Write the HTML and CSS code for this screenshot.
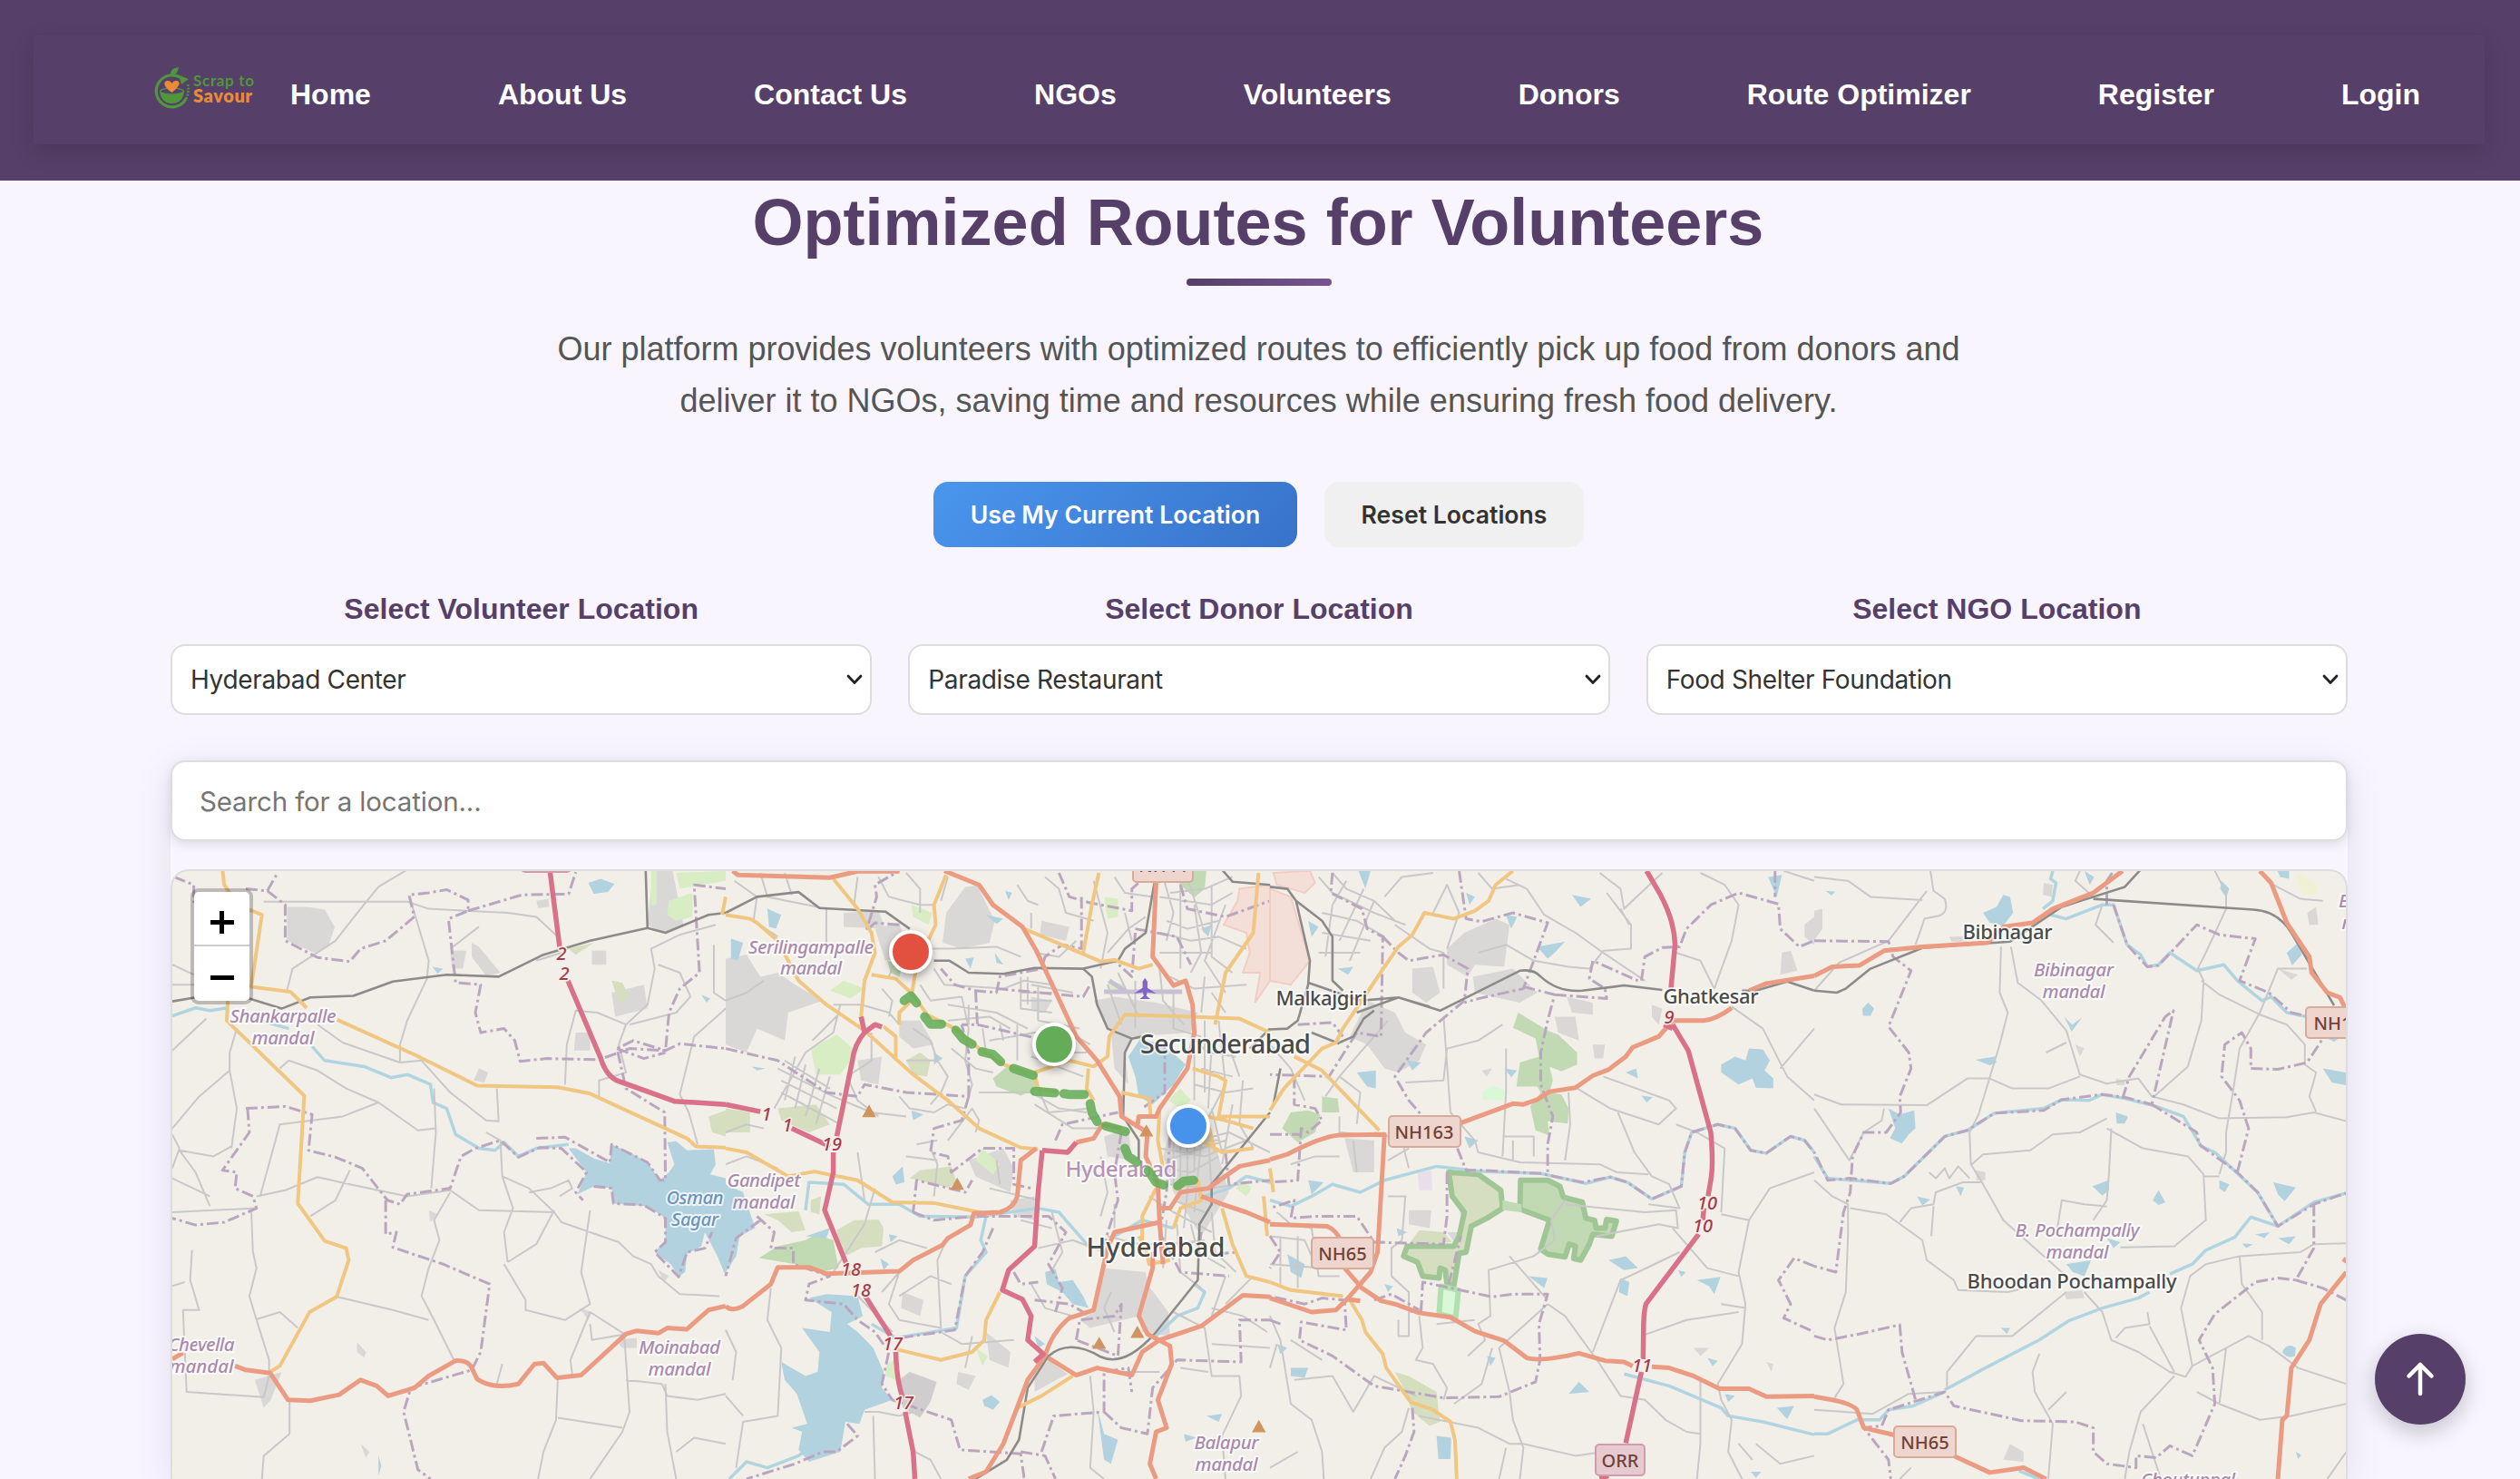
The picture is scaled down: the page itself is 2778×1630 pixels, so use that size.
FILE: index.html
```html
<!DOCTYPE html>
<html lang="en">
<head>
<meta charset="utf-8">
<title>Scrap to Savour - Route Optimizer</title>
<link rel="stylesheet" href="styles.css">
</head>
<body>
<header class="header">
  <nav class="nav">
    <svg class="logo" viewBox="0 0 112 52" aria-label="Scrap to Savour">
      <path d="M31 14A17.500 17.500 0 1 0 35 36" fill="none" stroke="#4f973a" stroke-width="3.200"/>
      <path d="M35 36Q39 28 37 20" fill="none" stroke="#4f973a" stroke-width="2.600" stroke-dasharray="2 1.600"/>
      <path d="M18 10Q17 2 27 1Q26 10 18 10Z" fill="#4f973a"/>
      <path d="M27 10L38 14L30 20Z" fill="#4f973a"/>
      <path d="M6 28Q19 35 33 28Q31 41 19.500 41Q8 41 6 28Z" fill="#4f973a"/>
      <ellipse cx="19.500" cy="27.500" rx="13" ry="3.500" fill="none" stroke="#4f973a" stroke-width="1.300"/>
      <path d="M19.500 29C8 21 11 16 15 16Q18 16 19.500 19Q21 16 24 16C29 16 30 21 19.500 29Z" fill="#e88b37"/>
      <text x="43" y="21.500" class="logo-a" textLength="67">Scrap to</text>
      <text x="43" y="40" class="logo-b" textLength="65">Savour</text>
    </svg>
    <a>Home</a><a>About Us</a><a>Contact Us</a><a>NGOs</a><a>Volunteers</a><a>Donors</a><a>Route Optimizer</a><a>Register</a><a>Login</a>
  </nav>
</header>
<main class="page">
  <h1 class="title">Optimized Routes for Volunteers</h1>
  <div class="rule"></div>
  <p class="lead">Our platform provides volunteers with optimized routes to efficiently pick up food from donors and<br>deliver it to NGOs, saving time and resources while ensuring fresh food delivery.</p>
  <div class="actions">
    <button class="btn btn-primary">Use My Current Location</button>
    <button class="btn btn-plain">Reset Locations</button>
  </div>
  <div class="pickers">
    <div class="picker"><h3>Select Volunteer Location</h3><div class="select"><span>Hyderabad Center</span><svg viewBox="0 0 20 14"><path d="M3 3l7 7.500l7-7.500"/></svg></div></div>
    <div class="picker"><h3>Select Donor Location</h3><div class="select"><span>Paradise Restaurant</span><svg viewBox="0 0 20 14"><path d="M3 3l7 7.500l7-7.500"/></svg></div></div>
    <div class="picker"><h3>Select NGO Location</h3><div class="select"><span>Food Shelter Foundation</span><svg viewBox="0 0 20 14"><path d="M3 3l7 7.500l7-7.500"/></svg></div></div>
  </div>
  <section class="map-card">
    <div class="search">Search for a location...</div>
    <div class="map">
      <svg class="map-canvas" viewBox="190 960 2396 670">
        <!-- western countryside -->
        <g transform="translate(180 940) scale(.3954 .44)">
          <path class="u" d="M345 135H400L450 142L478 185L460 235L420 250L345 220ZM860 225L880 235L940 300L900 308L860 260ZM800 245H845L835 290H805ZM1195 245H1235V280H1195ZM1150 450H1190V495H1145ZM1250 350L1340 330L1350 390L1260 410ZM1365 45H1420L1450 180L1390 200L1350 180ZM880 540L905 550L895 575L865 570ZM1040 120L1075 115V135L1045 138ZM540 1225L565 1250L560 1265L540 1250ZM740 895L765 905L745 925ZM255 1320L330 1300L300 1370L280 1390ZM550 1480L575 1500L565 1515ZM1160 1140L1195 1150L1185 1170ZM1260 1220L1320 1215L1320 1240L1280 1240ZM1380 1045L1410 1060L1395 1075Z"/>
          <path class="p" d="M1360 45H1375V130H1360ZM1430 50L1568 45V70L1440 90ZM1410 120L1475 100V160L1430 170L1405 155Z"/>
          <path class="o" d="M1250 320L1280 325L1300 360L1270 375ZM1130 240L1200 225L1150 255ZM1520 660L1568 645V710L1530 700Z"/>
          <path class="w" d="M1185 75L1220 65L1258 78L1240 98L1200 102ZM1130 740H1150L1200 765L1245 778L1250 730L1300 750L1350 775L1385 820L1410 800L1425 780L1405 725L1430 722L1460 745L1535 742L1540 780L1525 805L1568 815V1060L1545 1010L1510 950L1500 985L1460 1005L1455 1050L1437 1062L1415 1030L1370 1000L1400 970L1400 915L1350 885L1255 878L1250 840L1200 835L1155 855L1180 800ZM750 285L780 290L765 302ZM600 1510L608 1535L600 1560ZM1500 355L1525 365L1515 375Z"/>
          <path class="v" d="M25 408L90 388L130 395L180 388M230 410L350 440M415 485L450 520L560 535L635 563L680 555L745 580L752 625L790 640L815 705L880 740L925 745L950 725L990 760L1040 740L1130 730"/>
          <path class="r" d="M680 42L600 85L550 140L480 220L360 290L345 345M280 122H680L740 140L960 150L1040 160L1100 210M690 120L740 270L735 315L680 420L660 480V525M880 185L800 240M25 280L85 305M25 330H90M205 440L185 500V545L100 610L25 690M120 415L25 495M185 545L205 640L190 740M25 705L45 740L25 790M45 745L140 760L190 735M45 745L90 800L130 885M25 815L130 860M25 900L260 890M260 860L340 845L430 812L520 830L680 860L800 845L880 895L1090 900L1110 925L1270 975L1310 1010L1360 1030L1380 1060L1440 1105L1550 1110M270 860L325 680L500 660L600 625L710 695L760 690M600 625L510 590L430 545L350 520L325 540M430 430L500 475L660 525L720 520L800 600L900 670L935 672L930 590M755 590L760 700L747 840M900 700L940 720L945 810L975 890L950 950L960 1025M800 850L755 920L770 970L740 1040L720 1110L755 1170L810 1270M485 1112L640 1145L740 1170M245 890L250 1000L260 1040L240 1110L260 1170L295 1270V1300M260 1168L325 1150L375 1190M80 995L75 1070L100 1145H55L65 1350L280 1363L295 1310M25 1085L60 1075M352 1375V1455L280 1510L275 1568M945 810L1020 840L1090 900M950 1030L1010 1120V1145L1120 1170L1190 1130L1165 1050L1190 895M1090 895L1040 980L960 1025M1190 1150L1285 1205L1300 1400L1280 1450L1190 1568M1190 1150L1135 1270L1140 1305M1100 1315L1095 1420L1060 1500L1045 1568M1100 1415L1280 1440M1290 1320L1390 1330L1405 1360L1490 1370L1568 1355M1400 1330L1405 1450L1430 1568M1430 1500L1480 1465L1568 1480M1120 580L1125 480L1150 395L1210 400L1290 430L1350 380L1370 290L1360 240L1440 205L1540 180M1290 430L1270 480L1290 550L1215 570V610M1380 280L1440 300L1470 360L1430 400L1300 430M1568 390L1480 460L1440 605L1465 650L1490 730M1535 230V350L1568 370M1040 270L1110 250M1190 1180L1195 1220L1290 1205M945 1280L930 1330M410 910L480 870L520 795M1020 850L1080 840L1130 820L1140 840L1105 860"/>
          <path class="b" d="M30 60L85 80V125M230 90L290 95L340 130V220L430 262L520 272L550 240L620 220L700 160L685 105L740 100L790 92L850 118L850 145L795 165L815 325L885 330L870 400L885 450L950 440L980 470L995 522L1070 515L1215 518L1300 490L1400 495L1410 400L1440 340L1495 300L1480 80L1568 90M290 95L320 48M850 145L1000 105L1130 103L1150 48M230 640L340 635L415 655L405 745L480 762L555 790L625 870L660 880L680 855L800 840L830 760L870 740L940 720L990 762L1050 738L1110 740L1180 800L1150 850L1170 870M235 640L240 700L165 795L205 800L200 840L250 860L260 890L170 925L90 932L25 915M620 870V955L650 950L640 988L780 1030L910 1080L885 1250L860 1295L690 1340L670 1400L710 1545L745 1568M1040 715L1120 712L1245 775L1250 730L1350 775L1385 820H1400L1398 650L1290 590L1265 490L1310 470L1400 495L1440 478L1568 490M1200 835L1250 840L1255 878L1340 882L1400 915V975L1370 1000L1437 1062L1460 1000L1510 990L1530 950M1265 490L1340 515L1400 500"/>
          <path class="rail" d="M25 372L90 362M240 365L330 390L410 362L530 358L640 322L790 305L935 310L1060 255L1190 220L1350 188L1400 200L1520 155L1568 150M1350 188L1345 45"/>
          <path class="s" d="M165 42L170 80L185 100M240 142L275 155L245 335L355 348L400 388M180 370L177 420L393 608L375 878L450 972L510 990L517 1020L483 1112L408 1150L325 1285L298 1300M485 418L700 505L875 583L1100 587L1190 603L1460 715L1485 735L1568 738M1568 110L1558 155"/>
          <path class="t" d="M25 1268L55 1252M200 1285L230 1295L298 1303L348 1370L410 1372L490 1357L550 1320L595 1335L627 1360L700 1340L740 1310L815 1272Q850 1270 860 1290L875 1318Q920 1345 990 1330L1035 1280L1060 1278L1098 1315L1165 1308L1290 1205L1320 1197L1380 1203L1405 1190L1460 1193L1520 1145L1568 1135"/>
          <path class="m" d="M1078 45L1105 235M1128 320L1220 515Q1235 560 1270 572L1425 622L1568 630"/>
        </g>
        <!-- city and western lakes -->
        <g transform="translate(800 940) scale(.38265 .44)">
          <path class="u" d="M0 265L60 255L100 310L150 300L200 330L280 370L180 400L170 470L90 440L60 500L0 480ZM625 225L635 150L690 85L725 82L775 170L760 225L680 240ZM500 420H560L600 480L540 490L500 460ZM340 150L440 145L460 190L340 185ZM430 190L500 175L530 260L460 270ZM1060 370L1120 360L1240 375L1360 400L1340 450L1170 460L1150 500L1160 580L1120 540L1110 450ZM1090 710L1160 690L1170 770L1100 760ZM1280 690L1400 700L1450 850L1370 960L1290 850L1260 760ZM1085 1040L1210 1050L1215 1080L1275 1150L1280 1210L1200 1200L1190 1160L1050 1190L1020 1170L1060 1150ZM750 1200L820 1250L815 1290L760 1270ZM670 1300L720 1310L700 1345L665 1330ZM890 1310L930 1270L985 1305L890 1350ZM700 770L800 740L830 790L820 850L720 810ZM510 1100L570 1120L560 1160L505 1140ZM910 170L990 185L980 220L905 205ZM380 520L450 510L440 580L390 570ZM880 360L940 370L920 400L880 390ZM820 870L890 860V920L830 910Z"/>
          <path class="u u-dark" d="M500 1320L530 1300L608 1325L590 1375L560 1415L510 1390Z"/>
          <path class="f" d="M770 565L810 535L890 560L895 590L850 608L780 585ZM95 1015L150 985L230 970L260 955L310 970L325 1040L285 1048L200 1030ZM1310 80L1340 42H1385L1380 90L1350 112ZM465 270L510 280L500 310L475 300Z"/>
          <path class="o" d="M320 945L370 920L440 918L455 940L450 985L390 990L350 1008L325 980ZM530 815L560 795L650 785L665 825L640 838ZM110 905L210 898L230 945L190 950L150 920ZM520 520L560 500L590 520L580 560L540 555ZM150 640L260 630L300 680L240 700L160 670ZM0 640L70 650V700L0 700ZM245 870L275 860L270 905L245 900Z"/>
          <path class="p" d="M245 490L320 455L380 500L330 555H260ZM300 345L340 320L400 340L360 365ZM535 130L595 150L585 180L540 160ZM720 770L740 740L790 780L770 805ZM1090 110L1130 115L1130 160L1100 165ZM1275 620L1310 590L1340 620L1310 640ZM465 1280L485 1270L490 1320L460 1310ZM1470 840Q1490 815 1515 840L1500 860ZM720 1240L755 1260L740 1285ZM1100 320L1150 330L1140 345L1100 340Z"/>
          <path class="mil" d="M1480 90L1568 80V320L1525 375L1540 300L1490 300L1510 250L1500 200L1435 180L1475 120Z"/>
          <path class="w" d="M1160 510L1195 465L1260 480L1300 510L1325 530L1290 580L1230 630L1190 610L1180 560ZM0 830L50 850L85 940L40 960L30 1010L0 1050ZM240 1115L290 1105L380 1110L395 1160L350 1180L380 1200L425 1240L455 1300L450 1340L480 1370L400 1395L385 1430L345 1425L330 1500L240 1525L210 1495L220 1450L190 1440L235 1430L205 1355L170 1320L160 1275L230 1310L265 1300L270 1250L220 1190L300 1200L305 1150ZM920 1050L950 1042L960 1075L1000 1070L1030 1110L1045 1140L1000 1130L970 1100L925 1080ZM480 810L510 785L515 825L490 830ZM120 140L160 155L145 190L125 185ZM15 215L50 225L35 270L15 265ZM740 1370L765 1358L790 1375L770 1395L745 1385ZM1070 1390L1090 1455L1130 1470L1110 1530L1090 1520ZM1385 1410L1430 1405L1420 1425ZM1320 1455L1355 1465L1325 1475ZM750 155L800 165L780 178ZM690 265L715 262L705 290ZM775 250L800 280L780 275ZM300 940L290 965L230 960ZM445 1015L470 1030L455 1045ZM470 955L495 960L475 975ZM805 95L825 100L815 118ZM600 500L625 515L600 530ZM535 645L570 655L540 670ZM890 1210L920 1230L900 1240ZM1370 190L1400 180L1390 210ZM75 535L115 540L90 545Z"/>
          <path class="v" d="M230 895L240 825L340 830L410 880L500 880L560 910L720 912L900 890L960 900L1050 990M1120 960L1200 920L1290 940M750 910L735 970L750 1000L690 1060L665 1190L490 1215L420 1180M1350 1080L1380 1100L1360 1140L1300 1160L1240 1210M1380 860L1450 840L1500 810L1568 825M10 1568L60 1525L120 1540L210 1510L240 1490"/>
          <path class="r" d="M25 70L90 110L80 170L150 210M100 50L120 110L290 140V230M170 50L190 105M380 60L370 130M440 60L470 110L560 130L600 130M520 50L560 90V150M590 240H650L780 235L850 260M880 150V190M640 60L620 120M330 380L310 450L230 500L140 640M310 380H390L470 400L500 430M330 400L250 470M500 250L470 310M560 330L590 370L680 360L700 440L690 520L710 580L690 640L640 630L600 650L530 640L500 610M600 290L630 330L800 340L860 320L940 330M850 310V390L940 400M870 310V380M900 330V420M850 350H940M850 370H940M450 340L480 370L470 410M540 440L590 470L610 520L520 520M610 520L640 560L620 600L590 630M150 540L310 610L420 650L520 660M170 520L300 590M200 510L170 620M230 530L200 640M270 540L230 660M300 560L260 680M160 600L330 680M160 570L320 640M420 450V520L350 560L380 620L440 660M0 700L60 680L110 690M0 780L60 760L150 790M0 370L60 350L110 320M600 860L610 780L590 740M550 730L610 720M720 700L730 670L710 640L640 720M730 600H880L960 640L1040 650M900 590L930 650L1050 640M760 470L890 450L990 450L1050 480M820 440L760 410L640 420M740 440L750 500M790 430L800 470M840 430V520M700 380V430M960 460V500L1040 500M1100 250L1160 190L1210 160M1060 70L1100 200L1080 290M920 60L960 90L980 150L1060 170M840 80L870 120L900 130M1010 220L960 260L890 250M1120 60L1150 100L1230 110M1150 150L1170 220M1100 330L1140 430M1130 300L1190 410M1180 320V440M1250 290L1260 370L1320 430M1290 350V440L1370 460M1260 60L1290 150L1270 220M1250 110L1400 130L1460 100M1270 170L1330 190L1420 170M1310 70V290M1350 130L1370 250L1340 300M1400 80V260L1460 300M1250 200L1340 220L1420 210L1500 240M1250 250H1400M1380 420V600M1420 420L1440 580L1380 680M1340 460L1390 500L1470 510M1350 580L1440 600L1520 590M1280 680L1360 720L1450 700L1568 750M1400 640L1430 750M1460 630L1430 780M1490 570L1480 680L1520 740M1250 740L1380 760L1500 720M1270 790L1340 800L1420 760M1290 700L1290 840M1330 700V850M1370 720L1350 900M1220 860L1290 900L1400 950M1270 920L1260 1040M1300 930L1310 1050L1370 1090M1340 930L1360 1000L1440 1040M1400 900L1410 1000L1470 1050M1120 880V940M1080 760L1100 850L1080 910M1000 790L1070 800M940 900L970 1000L930 1060M1100 960L1190 980H1280L1380 970M900 990L1000 970L1090 1000M880 1080L920 1140L1000 1160M640 960L610 1020L620 1190L500 1170L470 1130L500 1050M500 1050L450 1100M370 1100L480 1200M620 1200L680 1230L830 1220M710 1210L690 1290M130 1090L120 1170L160 1240L150 1410L50 1425L30 1540M0 1195L30 1250L20 1320M0 1360L50 1410M400 1400L440 1400L500 1410L540 1400M425 1410L430 1568M545 1500L590 1520L620 1568M1050 1310L1060 1400L1050 1540L1090 1568M1290 1150L1380 1190L1400 1310H1480L1485 1360L1430 1460L1440 1568M1110 1100L1090 1140L1120 1200M1400 1230L1568 1240M1390 1300L1310 1290M1250 1300L1120 1300M1560 1200L1490 1160L1400 1140M850 920L940 940M760 840L900 870M780 770L790 830M520 760L610 770M380 750L400 870M430 840L400 930L310 1050M430 1000L500 970L580 990M650 1080L590 1060L500 1110M1440 1060L1400 1160M1520 1060L1440 1130M640 380L780 400L870 440M880 330L1000 350M900 420L1020 440M650 490L720 540L770 550M880 510L1030 560M890 630L1000 690L1080 690M1280 720H1420M1270 770L1440 720M1310 690V840M1350 690V800M1390 700L1400 850M1280 830L1400 840L1480 830M1290 870L1380 900M1330 850L1320 940M1350 480V620M1370 540L1460 560M1400 480L1390 640M1440 460L1480 560M1280 100L1380 90L1460 60M1330 60L1380 200M1440 130L1380 270L1440 350M1280 310L1350 340L1500 330M1380 310L1370 400M1400 350L1440 400"/>
          <path class="b" d="M500 180L430 175L405 195L435 110L430 80L500 45M960 50L990 110L1050 125L1170 145L1170 90L1210 60M1025 110V240L970 230L920 260L910 290L790 310L780 350L720 345L660 330L620 290M720 345L725 430L680 430M780 340L1030 360L1050 330M725 430L900 465M1180 190L1300 210L1340 280M1310 80L1330 140L1440 160L1568 120M1180 200L1170 310L1120 270M0 490L150 520L290 600L380 610L400 580L520 600L700 610V500L680 430M700 610L680 670L600 690L590 750L640 760L650 800L740 740L830 740V830L880 840M540 900L550 820L690 850L710 820M540 900L600 920L720 910L930 910L980 950L930 1030L970 1090L950 1150M1140 700L1120 800L1130 870L1090 980M950 720L970 680L1130 650M1265 470V600L1200 640M1280 710L1270 850L1250 950L1310 1050L1450 1060M1440 750L1450 830L1568 820M1370 950L1360 1010L1470 1000M90 910L140 950L130 990L195 990V1030L300 1060L240 1080L230 1120L340 1130L380 1170L430 1200L470 1250L450 1330L480 1370L650 1420L675 1495L850 1505L860 1568M770 940L740 1000L690 1060L660 1195L500 1215M850 1500L920 1510L950 1568M910 1500L945 1410L1090 1400V1300L1160 1290L1170 1350M1090 1400L1140 1440L1215 1455L1230 1340L1300 1270L1485 1275L1480 1170H1568M1010 1220L1020 1170L1120 1160L1140 1130L1130 1260L1010 1220M830 1050L850 1080L900 1075M890 1120L990 1130L1050 1160M100 920L30 965L0 1060M350 1430L380 1460L320 1500L280 1500L200 1530L60 1568"/>
          <path class="rail" d="M0 150L90 110L210 98L270 138L460 147L530 190M600 270L645 270L700 300L800 303L890 288L1030 290L1130 270L1150 240L1210 200L1235 75M1030 290L1055 310L1070 380L1100 440L1170 465L1150 500L1145 660L1190 720V770M1170 465L1200 460M1568 650L1400 830V880L1365 930L1360 1070L1240 1200Q1150 1290 1080 1262Q990 1215 930 1260L870 1340L845 1470L810 1520L720 1568M1430 42L1460 72L1568 80M1568 440L1510 490"/>
          <path class="s" d="M0 155L70 165L90 175L150 220L210 320L290 380L400 445L540 555L640 620L730 690L850 738L900 742M390 410L400 320L430 250L420 200L380 140L310 65M420 305L490 315L540 355L580 405L660 440L730 490L800 530L890 555L900 590L960 600M635 55L600 130L605 180L550 280L535 360M535 370L500 400V430M455 435L490 460V520M1075 50L1055 130L1030 250M860 190L1080 272L1120 268L1190 290L1230 280M890 550L990 520L1060 535L1100 510L1105 460L1150 405L1260 408L1480 415L1568 450M1045 540L1040 590L1060 620M1535 50L1520 200L1440 300L1410 430M1345 540L1420 560L1440 570L1420 660L1568 660M1140 600L1220 615L1225 665M1330 650L1440 670L1520 690M1350 710L1430 750L1520 740M1250 640L1245 720L1260 790M0 740L60 750L180 810L255 798L380 820L480 875L600 877L760 905M1240 840L1200 910V970M1290 940L1310 890L1370 870L1360 820L1290 840M1430 890L1460 980L1500 1060L1568 1075M790 1100L750 1170L745 1220L710 1250L620 1270L490 1243M840 1390L910 1360L1000 1310M1190 960L1210 990L1220 1030L1280 1020M1550 860L1560 960M1390 680L1410 750"/>
          <path class="t" d="M0 1135Q15 1150 50 1135L130 1080L150 1038H240L290 1054L500 1048L540 1020L625 982L640 965L705 932L715 903L790 900Q830 890 840 860L850 770L895 740M20 45L35 55L300 62L380 46H500M630 45L730 80L770 130L855 185L895 245L1010 460L1070 520L1135 610L1140 660L1215 700L1210 760L1245 830L1250 925L1120 950L1100 990L1060 1145L990 1165Q940 1200 920 1260L870 1320L835 1400L800 1480L750 1550L700 1568M1240 70L1230 260L1290 332L1325 320L1345 380L1350 450L1330 540L1250 640L1240 660H1190L1185 690M1010 725L1060 715L1085 680L1140 690M1250 890L1280 890L1310 850L1390 840L1480 785L1568 770M1370 860L1430 880L1500 900L1568 925M930 1265L1010 1308L1070 1290L1170 1308L1200 1250L1250 1220L1370 1185L1490 1108L1568 1112M1250 925L1260 1030M1230 1000V1040L1190 1160L1215 1205L1280 1235L1285 1280L1245 1370L1270 1440L1240 1450L1222 1530L1240 1568"/>
          <path class="m" d="M0 630L100 648M190 690L300 735M390 410L400 450Q370 480 365 520L320 710M400 450L430 430L450 436M310 750V800L285 895L348 1030M402 1110L475 1210M490 1250Q492 1320 510 1365M517 1400L540 1500L545 1568M912 745L985 750L1010 725M912 745L900 850L890 985L815 1045L797 1095L855 1118L880 1160L870 1220L915 1255L890 1275"/>
          <path class="peak" d="M413 630L433 662H393ZM667 813L687 844H647ZM1212 680L1232 710H1192ZM1076 1212L1096 1242H1056ZM1186 1184L1206 1215H1166ZM1536 1420L1556 1451H1516Z"/>
          <path class="runway" d="M1090 348H1315M1105 320L1150 345"/>
          <path class="airport" d="M1208 313L1215 322V338L1240 352L1214 349L1212 358L1223 366H1193L1204 358L1202 349L1176 352L1201 338V322Z"/>
        </g>
        <!-- eastern suburbs -->
        <g transform="translate(1400 940) scale(.38265 .44)">
          <path class="u" d="M410 290L470 285L490 350L450 375L410 350ZM510 240L560 200L650 165L690 180L675 285L590 280L570 310L510 280ZM585 310L700 290L770 350L720 375L590 350ZM280 370L360 400L390 450L450 480L430 520L370 550L330 540L280 480L230 460ZM820 410L880 410L890 470L830 450ZM855 360L930 375L930 405L870 400ZM215 715L300 720V800L240 800ZM400 895H465L460 940L400 930ZM1475 250L1500 245L1520 295L1470 305ZM1540 180L1568 160V230L1540 210ZM930 480L965 480L960 515L935 515ZM1100 380L1130 390L1120 430L1100 410ZM1220 1240H1265L1240 1260ZM1430 1275L1450 1280L1445 1300ZM510 950L545 950L535 980ZM610 545L640 540L625 560ZM770 560L800 560V590L770 580ZM540 880L560 890L550 910Z"/>
          <path class="mil" d="M10 50L115 45L130 75L100 100L60 90L20 80ZM0 90L60 110L90 200L115 270L60 330L0 320Z"/>
          <path class="f" d="M715 400L800 445L830 455L885 500L885 530L840 547L805 535L815 570L805 600L840 605L860 640L858 678L800 672L805 708L765 695L750 635L780 600L770 585H710L720 525L775 510L765 465L700 438ZM35 690L60 650L110 645L145 655L130 700L80 725ZM150 610L195 615L200 650L150 650Z"/>
          <path class="o" d="M360 1300L400 1310L480 1350L490 1425L460 1435L410 1400L390 1350ZM400 980L430 945L500 950L525 975Z"/>
          <path class="reserve" d="M515 800L600 805L665 845L670 890L625 915L580 935L565 1000L545 1003L530 1083L510 1080L505 1045L490 1040L487 1065L440 1060L425 1025L385 1010L395 985L530 985L545 960L560 900L525 860Z"/>
          <path class="reserve g" d="M722 820H800L835 835L845 862L900 875L910 915L935 920L940 940L965 940L970 918L998 922L985 960L930 955L920 980L895 1020L875 1016L880 985L862 980L850 1012L800 1005L780 992L805 920L720 892Z"/>
          <path class="f" d="M670 870L725 880V900L670 895Z"/>
          <path class="reserve l" d="M493 1085L543 1095L535 1165L487 1155Z"/>
          <path class="meadow" d="M610 600L640 583L680 595L670 620L615 618Z"/>
          <path class="works" d="M425 800L465 795L468 845L430 845Z"/>
          <path class="w" d="M1300 530L1340 510L1370 520L1380 490L1420 492L1440 520L1425 545L1450 565V590L1400 588L1390 565L1350 580L1300 550ZM770 235L850 222L820 250L800 265ZM250 550L305 545V590L280 585ZM195 290L240 285L225 305ZM110 170L140 185L120 210ZM395 520L435 525L410 545ZM680 155L712 160L695 190ZM675 540L712 545L695 562ZM1025 550L1055 540L1060 565ZM1070 608L1103 612L1085 625ZM975 1020L1025 1010L1060 1040L1020 1045ZM1230 1070L1298 1062L1280 1105L1265 1085ZM1010 1065L1035 1075L1030 1110L1005 1100ZM745 1060L800 1065L790 1090ZM860 1355L890 1325L920 1350ZM1460 1390L1510 1385L1490 1418ZM480 1460L522 1465L520 1518H485ZM1435 60L1475 55L1460 110ZM110 820L155 825L120 855ZM50 1005L100 1030L90 1065L60 1050ZM60 1290L110 1290L100 1315L60 1310ZM560 710L600 720L575 740ZM365 940L395 950L370 960ZM20 1230L50 1240L30 1255ZM870 105L925 115L895 135ZM255 45H290L275 90ZM330 1080L355 1085L340 1100ZM625 1260L650 1265L635 1285ZM1310 1355L1340 1360L1320 1375ZM1385 1550H1415L1400 1565ZM1260 1265L1290 1272L1275 1285ZM1175 1045L1198 1050L1185 1062ZM565 100L590 110L575 130Z"/>
          <path class="v" d="M0 870L60 885L120 860L180 830L260 850L330 820L480 785L610 798L780 803L910 828L980 812L1030 825L1100 867L1185 835L1195 750L1215 700L1290 680L1340 690L1385 745L1430 752L1500 710L1540 720L1568 750M1020 1305L1150 1335L1300 1390L1320 1410L1420 1425L1568 1457"/>
          <path class="r" d="M180 50L220 90L300 120L360 170M140 60L180 100L300 150L390 180M220 70L180 130L160 260M270 90L200 220M300 120L230 270M150 150L250 170L330 210M150 200L290 220M140 250H260M330 110L380 60L470 50M470 150L510 80L545 150L510 240M600 50L640 90L720 80M680 65L740 90L790 155L880 200L960 250L1080 320M360 180L460 240L500 250V340M600 250L680 230L760 270L860 285L920 290L960 245L1040 240L1040 180L970 100M950 50L1010 90L1020 140L1130 50M1010 140L1035 180M1240 50L1310 80L1350 130L1330 220L1280 340L1240 270L1170 250M1480 45L1568 70M390 575L500 570L510 490L600 470L670 430M500 410L520 650L590 720L600 750L720 775L950 780L1000 800L1090 805M680 490V600L670 760M860 600L865 680L850 770M885 590L980 640L1120 680L1170 640L1150 620L960 560M1000 645L1050 750L1100 810L1150 830L1180 890L1090 880M1170 680L1230 700L1310 740L1300 900M1300 905L1380 920L1350 1050L1370 1130L1360 1230L1290 1330L1300 1370L1330 1420L1320 1500L1360 1568M1380 920L1440 840L1568 800M1330 385L1420 440L1490 560L1568 620M1568 440L1470 540M850 870L810 920L820 970L760 1010L630 1045L635 1160L600 1180L620 1220L570 1260M850 880L1080 900L1170 895L1175 940L1120 930L940 960M1160 940L1210 990L1260 1040L1350 1060M800 1120L690 1010M800 1130L850 1160L950 1280L1010 1360L1080 1370L1140 1420L1200 1450L1240 1455M800 1130L660 1240L690 1350L700 1420L730 1490L720 1568M930 1250L1010 1070L1060 1050L1180 1000M1070 1210L1200 1170L1350 1150M1370 1140L1300 1130M1240 1320L1240 1480L1230 1568M430 1410L600 1440L690 1480H730L880 1510L960 1500M340 860L390 860L380 970L350 990L350 1060L400 1100V1150H440M370 1170V1210H400V1150M430 1160L440 1240L420 1270L470 1280L510 1340L500 1370M0 1160L30 1220L60 1380L120 1420L150 1500L155 1568M20 1230L0 1290M60 1220L150 1270M70 1320L180 1310L240 1400L300 1310L420 1360M0 1540L80 1500M400 1390L380 1450L330 1490L290 1568M200 660V700L320 710M160 610L200 560L260 600L250 680M200 560L340 420M0 480L60 540L100 620M60 780L130 760L200 760M20 900L60 930L120 940L140 1060L200 1060M0 960L100 970L120 1010M30 960V1080M80 960V1090M0 1030L150 1040M240 720L250 800M300 700L380 720L400 790M340 770L400 740M590 1170L480 1180M530 1380L610 1330L640 1240M1400 1480L1470 1530L1568 1510M670 710H760V760M700 720V770M1390 1520L1350 1480M660 1568L680 1490"/>
          <path class="b" d="M180 50L175 100L265 140L280 190L325 210L320 460L250 450L170 560L0 555M325 210L370 250L400 270L500 255L570 290L560 370L450 450L360 560L400 620L460 680M545 45L565 165L610 172L700 150L800 175L730 340L600 365L560 375M730 335L820 355L800 420L780 500V580L815 660L800 730V800M820 355L970 365L965 340L920 315L930 270L1060 320M1070 320L1080 260L1130 237L1180 235L1200 190L1270 130L1350 100L1465 128L1470 190L1525 235L1568 220M1455 45V110M70 560V630L130 640L150 670L110 700L90 690L80 820L0 825M80 430L180 425L210 460M0 705H90M540 740L565 795L610 795L780 803L900 825L980 812L1030 825L1100 867L1185 835L1195 750L1215 700L1290 680L1340 690L1385 745L1430 752L1500 710L1540 720L1568 750M510 800V910L500 980L300 975L250 910L130 910L60 915L70 870L0 890M515 1080L550 960M435 1150L440 1075L640 1112L700 1105H800L775 1180L778 1270L765 1325L660 1362L500 1365L300 1335L180 1260L85 1220L90 1175L220 1195L215 1120L150 1115L100 1130L0 1110M300 1120L350 1105L430 1145M410 1390L415 1450L390 1510L360 1568M1568 1035L1510 1015L1465 1070L1500 1130L1480 1165L1568 1200M0 960L30 1000L0 1040M0 1170L30 1180"/>
          <path class="rail" d="M0 85L50 90L75 120L115 270L110 330L80 420L50 440L0 442M75 120L150 170L180 210V320L210 345M110 325L260 370L370 362L490 395L720 295Q760 290 780 310Q830 350 900 345L1020 332L1130 343M250 400L370 362L460 385M200 475L240 460L270 415L300 395M1360 345H1400L1490 322L1568 345M30 540L10 630M120 450L200 478"/>
          <path class="s" d="M700 45L650 80L630 120L590 145L530 165L445 150L410 205L370 235L330 285L210 440L190 475L150 490L40 590L0 645M70 510L150 545L315 695M0 1075L60 1095L210 1110M230 1120L265 1170L275 1200L325 1255L335 1290L405 1375L470 1395L520 1425L533 1470L538 1568M0 790L10 850"/>
          <path class="t" d="M0 768L50 755Q150 710 200 707L330 705L310 1000L290 1050L225 1115L190 1145L120 1150L0 1115M548 677L700 628L730 630L770 618L805 598L880 588L930 558L975 543L1025 510L1045 487L1120 460L1160 420H1250Q1290 415 1330 388M1380 345L1430 327L1568 308M0 930L165 935Q190 945 200 965M215 1040L265 1090L320 1122L360 1130L430 1152L520 1163L590 1198L675 1222L740 1265Q780 1275 890 1253L965 1272L1020 1275L1045 1285M1100 1287L1150 1290L1220 1310L1295 1342H1380L1430 1362L1568 1360M225 1118L260 1122"/>
          <path class="m" d="M1085 45L1125 105Q1165 170 1167 230L1155 340M1160 430L1205 495L1270 700Q1278 780 1270 820L1262 860M1250 890L1247 920M1235 955L1083 1130Q1076 1150 1076 1200L1075 1268M1070 1300L1025 1478M975 1560L950 1568M1135 430L1160 440"/>
        </g>
        <!-- far east -->
        <g transform="translate(2000 940) scale(.49617 .44)">
          <path class="u" d="M0 145L18 140V190L0 220ZM510 75L530 80L528 110L508 105ZM1095 150L1115 135L1120 180L1100 180ZM555 1100L595 1095L600 1115L560 1118ZM435 1480L465 1500V1525L420 1520ZM580 480L600 490L590 510ZM360 795L380 800V820L360 820ZM1030 290L1075 305L1060 318ZM300 210L340 208V222H305ZM670 565L690 570V582H672Z"/>
          <path class="field" d="M1070 50L1115 75V105L1085 105Z"/>
          <path class="w" d="M375 150L405 135L420 105L435 110L442 150L420 182L390 175ZM600 45L622 60L612 80ZM905 70L922 90L915 112L902 90ZM1028 42H1055V65L1035 60ZM1050 250L1075 225L1083 255L1062 282ZM107 390L120 375L133 390L125 408H108ZM165 640L190 655L222 645L225 690L210 705L195 728L168 715L180 690ZM1130 540L1182 550V582L1150 575ZM1020 825L1070 838L1045 872L1030 855ZM555 410L573 430L595 412L572 448ZM358 518L400 510L405 525L390 532ZM670 650L697 660L690 678H672ZM618 835L653 820L655 845L640 858ZM752 870L765 845L780 875L765 882ZM900 820L922 830L912 850L900 840ZM228 860L258 868L240 883ZM315 835L333 838L325 860ZM560 1030L615 1020L600 1060L575 1050ZM980 955L1012 950L1000 965ZM1030 965L1070 960L1055 980ZM950 978L975 980L960 990ZM650 965L680 975L665 990ZM415 1190H435L428 1205ZM1040 1250Q1050 1225 1070 1240L1068 1260Q1050 1268 1040 1250ZM25 95L47 97L38 106ZM1140 465H1165L1155 473ZM1070 1500L1082 1508L1075 1518Z"/>
          <path class="v" d="M530 45L525 65L537 75L530 120L508 140M525 155L560 165L640 130L665 130L695 230L725 255L740 285L765 280L790 250L850 295L910 280L940 320L995 370L1015 360L1050 400L1092 410M0 760L30 815L170 828L200 810L290 710L340 695L400 652L510 640L550 618L610 620L640 605L690 615L760 635L820 660L860 735L890 750L985 850L1030 935L1110 875L1182 852M1030 935L970 912L935 962L870 995L840 1030L790 1055M745 1100L720 1115L640 1140L565 1172L500 1220L380 1290L290 1345M290 1350L220 1385L165 1395L145 1420H95L30 1455H0M455 1548L500 1568"/>
          <path class="r" d="M0 60L75 70L125 110L240 118M258 45L265 95L290 115Q300 150 275 158L245 165L225 230M250 95L165 220L55 275L0 345M415 235L412 350L430 400L412 480L365 655L345 700L348 780L370 820L420 920L500 1000L560 1060M437 235L452 325L505 370L560 445L590 555L650 578L720 565L750 610L820 630L900 665L1050 662L1110 650L1182 672M515 500L560 475M0 605L60 630L250 632L340 565L390 565L440 590L520 590L590 560M155 640L150 670L110 700L78 770L0 640M0 820L40 860L75 880L75 960L70 1100L45 1190L55 1260L65 1330L45 1365M80 890L160 905L240 970L250 1020L310 1070L320 1095L430 1100L500 1080M190 925L215 890L265 880L270 850L330 825H370M265 885L260 960M255 800L270 815L290 790L300 815L320 785L345 815M350 780L375 755L480 745L530 705L590 700L650 665M660 690L655 800L650 870L620 920M540 940L550 870L600 880L650 885M650 690L730 740L830 760L865 805L870 920L800 985L680 988M900 805L915 750V700L930 600L945 490L990 400L1030 290L1095 290M865 810H900M890 45L915 100V140L870 250L852 290L865 320L860 420L830 535L755 610M860 320L900 355L990 405L1050 430L1090 480V530L1115 550L1100 610L1115 648M1020 80L1080 115L1130 120M640 130L625 180L665 225M620 110L580 70L590 45M600 1100L640 1150L660 1220L720 1250L790 1300L825 1312L840 1285L815 1140L835 1060L870 1030L945 1010L1080 1000L1110 980L1182 978M560 1100L440 1210H360L295 1300V1345M670 1215L690 1190L745 1180L740 1150M745 1185L800 1300M945 1010L950 1080L995 1150V1220M840 1285L915 1240L965 1210L1010 1235L1075 1290L1182 1330M915 1240L900 1380M800 1310L725 1400L700 1500L690 1568M730 1430L770 1568M850 1350L900 1380L990 1420L1060 1410L1182 1380M500 1255L485 1300L490 1350L530 1430L520 1568M520 1395L560 1350M0 1395L130 1405L210 1355L290 1350M1182 1500L1140 1568M190 1568L215 1540"/>
          <path class="b" d="M0 220L165 222L175 260L215 295L165 435L210 500L215 540L190 610L192 650L160 700L110 700L85 760L80 850L65 900L48 1050L0 1035M650 130V70L665 45M665 130L695 230L740 285L765 282L850 180L900 205L980 215L945 320L1010 350L1060 400L1092 408M685 615L700 560L780 410L798 395L750 630L690 612L640 605L550 618L510 645L400 652L340 695L290 710L200 810L170 828L80 815L30 820L0 750M750 630L850 700L855 730L940 800L985 850L1030 935L1110 880L1182 852M940 800L965 690L945 620L905 560L912 480L950 450L970 490V540L1030 542L1095 525L1130 465M1110 880V990L1070 1070L1030 1065L980 1075L890 1155L855 1220L885 1290L890 1380L840 1510L790 1485L760 1515L715 1510V1540L650 1530L620 1500V1440L580 1425L460 1422L310 1385L290 1350L165 1395L150 1435L110 1440L165 1520L170 1568M1070 1070L1130 1090L1182 1120M0 1210L30 1220L100 1205L190 1182L195 1250L225 1370"/>
          <path class="rail" d="M0 345L50 350L70 340L125 290L240 238L435 222L550 135L690 85L725 42M620 115L975 142Q1030 145 1060 200L1155 382"/>
          <path class="t" d="M0 308L40 285L100 282L155 245L240 235L385 225L420 185L485 175L530 140L620 100L685 45M990 45L1015 75L1050 175L1100 260L1105 300L1140 350L1168 362L1178 385M1182 1050L1125 1130L1100 1220L1060 1290L1050 1410L1040 1420L1030 1568M1182 1015L1176 1025M0 1362L40 1370Q85 1380 95 1395L110 1440L178 1458M310 1510L390 1552L465 1540L515 1568"/>
        </g>
        <g class="shield">
          <rect x="1249" y="940" width="66" height="32"/><rect x="1531" y="1230" width="79" height="34"/><rect x="1446" y="1364" width="68" height="34"/><rect x="2542" y="1110" width="70" height="34"/><rect x="2088" y="1572" width="68" height="34"/>
          <g class="orr"><rect x="575" y="930" width="54" height="31"/><rect x="1759" y="1592" width="54" height="34"/></g>
        </g>
        <g class="shield-text"><text x="1282" y="961">NH44</text><text x="1570" y="1255">NH163</text><text x="1480" y="1389">NH65</text><text x="2583" y="1135">NH163</text><text x="2122" y="1597">NH65</text><text x="1786" y="1617" fill="#6e3350">ORR</text></g>
        <g class="exit"><text x="619" y="1058">2</text><text x="622" y="1080">2</text><text x="845" y="1235">1</text><text x="868" y="1247">1</text><text x="917" y="1268">19</text><text x="938" y="1406">18</text><text x="949" y="1429">18</text><text x="984" y="1488">17</text><text x="996" y="1553">17</text><text x="1840" y="1128">9</text><text x="1882" y="1333">10</text><text x="1877" y="1358">10</text><text x="1810" y="1512">11</text></g>
        <g class="mandal">
          <text x="312" y="1127" textLength="117">Shankarpalle</text><text x="312" y="1151" textLength="69">mandal</text>
          <text x="222" y="1489" textLength="73">Chevella</text><text x="222" y="1513" textLength="71">mandal</text>
          <text x="749" y="1492" textLength="90">Moinabad</text><text x="749" y="1516" textLength="69">mandal</text>
          <text x="894" y="1051" textLength="138">Serilingampalle</text><text x="894" y="1074" textLength="68">mandal</text>
          <text x="842" y="1308" textLength="81">Gandipet</text><text x="842" y="1332" textLength="69">mandal</text>
          <text x="1352" y="1597" textLength="71">Balapur</text><text x="1352" y="1621" textLength="69">mandal</text>
          <text x="2286" y="1076" textLength="88">Bibinagar</text><text x="2286" y="1100" textLength="69">mandal</text>
          <text x="2290" y="1363" textLength="137">B. Pochampally</text><text x="2290" y="1387" textLength="69">mandal</text>
          <text x="2412" y="1638" textLength="104">Choutuppal</text>
          <text x="2622" y="1000" textLength="88">Bibinagar</text><text x="2616" y="1024" textLength="69">mandal</text>
          <text class="lake" x="766" y="1327" textLength="63">Osman</text><text class="lake" x="766" y="1351" textLength="52">Sagar</text>
        </g>
        <g class="city">
          <text class="dist" x="1236" y="1297" textLength="123">Hyderabad</text>
          <text class="big" x="1274" y="1385" textLength="153">Hyderabad</text><text class="big" x="1351" y="1161" textLength="188">Secunderabad</text>
          <text x="1457" y="1108" textLength="101">Malkajgiri</text><text x="1886" y="1106" textLength="105">Ghatkesar</text><text x="2213" y="1035" textLength="99">Bibinagar</text><text x="2284" y="1420" textLength="231">Bhoodan Pochampally</text>
        </g>
        <g transform="translate(800 940) scale(.38265 .44)"><path class="route" d="M514 370L533 358L550 376M573 410L590 429H622M663 444L685 467L710 479M738 498L770 505L792 523M829 540L886 557M890 597L948 601M974 603L990 605L1033 605M1050 628L1055 650L1070 673M1095 684L1152 698M1150 740L1160 760L1185 775M1217 796L1240 825L1262 832M1302 834L1320 822L1348 820"/></g>
        <g class="marker"><circle cx="1004" cy="1049" r="22" fill="#e2513f"/><circle cx="1162" cy="1151" r="22" fill="#65ac59"/><circle cx="1310" cy="1241" r="22" fill="#4793eb"/></g>
      </svg>
      <div class="zoom"><div class="zoom-in"><i></i><i class="bar-v"></i></div><div><i></i></div></div>
    </div>
  </section>
</main>
<button class="to-top" aria-label="Back to top"><svg viewBox="0 0 40 44"><path d="M20 38V6M7.500 18.500L20 6L32.500 18.500"/></svg></button>
</body>
</html>
```

FILE: styles.css
```css
* { box-sizing: border-box; }
body { margin: 0; height: 1630px; overflow: hidden; background: #f8f5ff; font-family: "Liberation Sans", Arial, sans-serif; color: #333; }
.header { height: 199px; padding: 39px 39px 40px 37px; background: #563f68; }
.nav { height: 120px; padding-left: 133px; display: flex; align-items: center; background: #563f68; box-shadow: 0 8px 24px rgba(0,0,0,.13); }
.nav a { color: #fff; font-size: 32px; font-weight: 700; line-height: 36px; margin: 9px 140px 0 0; white-space: nowrap; }
.logo { width: 112px; height: 52px; margin: -1px 38px 0 0; flex: none; overflow: visible; }
.logo text { font-family: Lato, sans-serif; }
.logo-a { font-size: 17px; font-weight: 700; fill: #4f973a; }
.logo-b { font-size: 20px; font-weight: 800; fill: #e88b37; }
.page { width: 2400px; height: 1431px; margin: 0 0 0 188px; overflow: visible; }
.title { margin: 0; padding-top: 4px; text-align: center; font-size: 72px; line-height: 84px; color: #563f68; padding-right: 2px; }
.rule { width: 160px; height: 8px; margin: 20px auto 0; border-radius: 4px; background: linear-gradient(90deg, #563f68, #765591); }
.lead { margin: 41px 0 0; padding-right: 1px; text-align: center; font-size: 36px; line-height: 57px; color: #555; }
.actions { display: flex; justify-content: center; gap: 30px; margin-top: 61px; padding-right: 1px; }
.btn { height: 72px; border: 0; border-radius: 16px; font: 600 26.600px Inter, sans-serif; padding: 0; }
.btn-primary { width: 401px; color: #fff; background: linear-gradient(135deg, #4a96ee, #3872ca); }
.btn-plain { width: 286px; color: #333; background: #f0f0f0; }
.pickers { display: grid; grid-template-columns: repeat(3, 1fr); gap: 40px; margin-top: 50px; }
.picker h3 { margin: 0 0 20px; text-align: center; font-size: 32px; line-height: 37px; color: #563f68; }
.select { height: 78px; padding: 0 7px 0 20px; border: 2px solid #ddd; border-radius: 16px; background: #fff; display: flex; align-items: center; justify-content: space-between; font: 28px Inter, sans-serif; letter-spacing: -.35px; color: #333; }
.select svg { width: 20px; height: 14px; }
.select path { fill: none; stroke: #222; stroke-width: 2.800; stroke-linecap: round; stroke-linejoin: round; }
.map-card { margin-top: 50px; height: 792px; border-radius: 20px 20px 0 0; box-shadow: 0 10px 40px rgba(86,63,104,.13); }
.search { height: 89px; padding: 0 30px; border: 2px solid #ddd; border-radius: 16px; background: #fff; font: 29.500px/86px Inter, sans-serif; letter-spacing: -.15px; color: #757575; box-shadow: 0 4px 12px rgba(0,0,0,.1); }
.map { position: relative; height: 672px; margin-top: 31px; border: 2px solid #ddd; border-bottom: 0; border-radius: 20px 20px 0 0; overflow: hidden; background: #f2efe9; }
.map-canvas { display: block; width: 2396px; height: 670px; }
.map-canvas path { vector-effect: non-scaling-stroke; }
.map-canvas .u { fill: #d9d8d7; } .map-canvas .u-dark { fill: #cfcdcd; } .map-canvas .p { fill: #d9edc4; } .map-canvas .f { fill: #c1dab4; } .map-canvas .o { fill: #d5dfbf; } .map-canvas .w { fill: #b1d2de; }
.map-canvas .field { fill: #eef2d2; } .map-canvas .meadow { fill: #d8f8d8; } .map-canvas .works { fill: #e9dfea; }
.map-canvas .mil { fill: #f4dfd8; stroke: #f2cdc4; stroke-width: 2; }
.map-canvas .reserve { fill: #d5dfbf; stroke: #9fc694; stroke-width: 6; stroke-linejoin: round; } .map-canvas .g { fill: #c1dab4; } .map-canvas .l { fill: #d8f8d8; stroke: #b1dfae; }
.v, .r, .b, .rail, .s, .t, .m, .route, .runway { fill: none; stroke-linejoin: round; }
.v { stroke: #b1d5e0; stroke-width: 3.500; } .r { stroke: #c9c8c9; stroke-width: 2; } .b { stroke: #bba6bf; stroke-width: 3; stroke-dasharray: 13 4 3 4; } .rail { stroke: #8d8b89; stroke-width: 2.600; } .s { stroke: #f0c680; stroke-width: 4; } .t { stroke: #eb9b81; stroke-width: 5; } .m { stroke: #d97289; stroke-width: 5.500; }
.peak { fill: #cf945f; } .runway { stroke: #c5c1d2; stroke-width: 5; } .airport { fill: #8365c4; }
.route { stroke: #66ae59; stroke-width: 10; stroke-linecap: round; opacity: .88; }
.shield rect { fill: #eed5cd; stroke: #d7aa9c; stroke-width: 2; rx: 4px; } .shield .orr rect { fill: #e7c9d1; stroke: #d39cad; }
.map-canvas text { font-family: "Noto Sans", sans-serif; paint-order: stroke; stroke-linejoin: round; text-anchor: middle; }
.shield-text text { font-size: 20px; font-weight: 500; fill: #704137; }
.exit text { font-size: 20px; font-style: italic; font-weight: 500; fill: #a33e45; stroke: #f5eeee; stroke-width: 3px; }
.mandal text { font-size: 20.500px; font-style: italic; font-weight: 500; fill: #a98aae; stroke: rgba(255,255,255,.75); stroke-width: 4px; } .mandal .lake { fill: #6a93bd; }
.city text { font-size: 22px; font-weight: 500; fill: #4a4a4a; stroke: rgba(255,255,255,.7); stroke-width: 4px; } .city .big { font-size: 29px; } .city .dist { font-size: 24px; fill: #b193b5; }
.marker circle { stroke: #fff; stroke-width: 4px; filter: drop-shadow(0 4px 5px rgba(0,0,0,.35)); }
.zoom { position: absolute; left: 20px; top: 19px; width: 69px; border: 4px solid rgba(0,0,0,.22); border-radius: 9px; background: #fff; background-clip: padding-box; }
.zoom div { height: 60px; padding-top: 9px; display: grid; place-items: center; } .zoom .zoom-in { border-bottom: 2px solid #ccc; }
.zoom i { grid-area: 1 / 1; width: 26px; height: 5px; background: #000; } .zoom .bar-v { width: 5px; height: 25px; }
.to-top { position: fixed; right: 60px; bottom: 60px; width: 100px; height: 100px; padding: 0; border: 0; border-radius: 50%; background: #563f68; box-shadow: 0 8px 24px rgba(0,0,0,.22); display: grid; place-items: center; }
.to-top svg { width: 40px; height: 44px; } .to-top path { fill: none; stroke: #fff; stroke-width: 4.500; stroke-linecap: round; stroke-linejoin: round; }
```
